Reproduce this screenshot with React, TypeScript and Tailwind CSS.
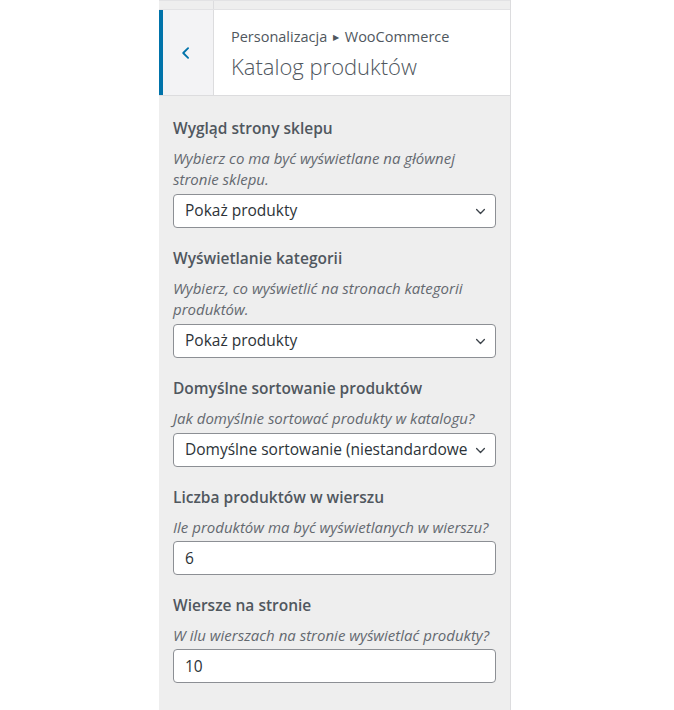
const font = { fontFamily: '"Open Sans", "Noto Sans", sans-serif' };

interface FieldProps {
  title: string;
  description: string;
  value: string;
  kind: 'select' | 'input';
}

function Chevron() {
  return (
    <svg className="w-[13px] h-[13px] text-[#3c434a]" viewBox="0 0 20 20" fill="none">
      <path d="M4 7l6 6 6-6" stroke="currentColor" strokeWidth="2" strokeLinecap="round" strokeLinejoin="round" />
    </svg>
  );
}

function Field({ title, description, value, kind }: FieldProps) {
  return (
    <div className="mb-[20px]">
      <div className="text-[15.5px] leading-[20px] font-semibold text-[#50575e] mb-[10px]">{title}</div>
      <div className={`text-[15px] leading-[21px] italic text-[#646970] ${kind === 'select' ? 'mb-[4px]' : 'mb-[3px]'}`}>
        {description}
      </div>
      {kind === 'select' ? (
        <div className="h-[34px] bg-white border border-[#8c8f94] rounded-[4px] flex items-center pl-[11px] pr-[8px]">
          <span className="flex-1 overflow-hidden whitespace-nowrap text-[15.5px] text-[#2c3338]">{value}</span>
          <span className="pl-[4px] flex items-center">
            <Chevron />
          </span>
        </div>
      ) : (
        <input
          type="text"
          defaultValue={value}
          className="block w-full h-[34px] bg-white border border-[#8c8f94] rounded-[4px] px-[11px] text-[15.5px] text-[#2c3338] outline-none"
          style={font}
        />
      )}
    </div>
  );
}

const fields: FieldProps[] = [
  {
    title: 'Wygląd strony sklepu',
    description: 'Wybierz co ma być wyświetlane na głównej stronie sklepu.',
    value: 'Pokaż produkty',
    kind: 'select',
  },
  {
    title: 'Wyświetlanie kategorii',
    description: 'Wybierz, co wyświetlić na stronach kategorii produktów.',
    value: 'Pokaż produkty',
    kind: 'select',
  },
  {
    title: 'Domyślne sortowanie produktów',
    description: 'Jak domyślnie sortować produkty w katalogu?',
    value: 'Domyślne sortowanie (niestandardowe',
    kind: 'select',
  },
  {
    title: 'Liczba produktów w wierszu',
    description: 'Ile produktów ma być wyświetlanych w wierszu?',
    value: '6',
    kind: 'input',
  },
  {
    title: 'Wiersze na stronie',
    description: 'W ilu wierszach na stronie wyświetlać produkty?',
    value: '10',
    kind: 'input',
  },
];

export default function App() {
  return (
    <div className="w-full h-[710px] bg-white overflow-hidden" style={font}>
      <div className="ml-[159px] w-[352px] h-[710px] bg-[#eeeeee] border-r border-[#dcdcde] flex flex-col">
        {/* top strip */}
        <div className="h-[10px] flex border-t border-[#e2e2e4] border-b border-[#dcdcde]">
          <div className="w-[55px] border-r border-[#dcdcde]" />
        </div>

        {/* header */}
        <div className="h-[86px] flex border-b border-[#dcdcde]">
          <button
            type="button"
            className="w-[55px] bg-[#f3f3f5] border-l-[4px] border-[#0073aa] border-r border-r-[#dcdcde] flex items-center justify-center"
          >
            <svg className="w-[14px] h-[14px] text-[#0073aa] -ml-[4px]" viewBox="0 0 20 20" fill="none">
              <path d="M13 3l-7 7 7 7" stroke="currentColor" strokeWidth="2.6" strokeLinecap="round" strokeLinejoin="round" />
            </svg>
          </button>
          <div className="flex-1 bg-white pl-[17px] flex flex-col justify-center pt-[2px]">
            <div className="text-[14.5px] leading-[20px] text-[#50575e]">
              Personalizacja <span className="text-[8px] align-[2px] mx-[2px]">▶</span> WooCommerce
            </div>
            <div className="text-[22px] leading-[30px] font-light text-[#50575e] mt-[4px]">Katalog produktów</div>
          </div>
        </div>

        {/* controls */}
        <div className="px-[14px] pt-[22px]">
          {fields.map((f) => (
            <Field key={f.title} {...f} />
          ))}
        </div>
      </div>
    </div>
  );
}
